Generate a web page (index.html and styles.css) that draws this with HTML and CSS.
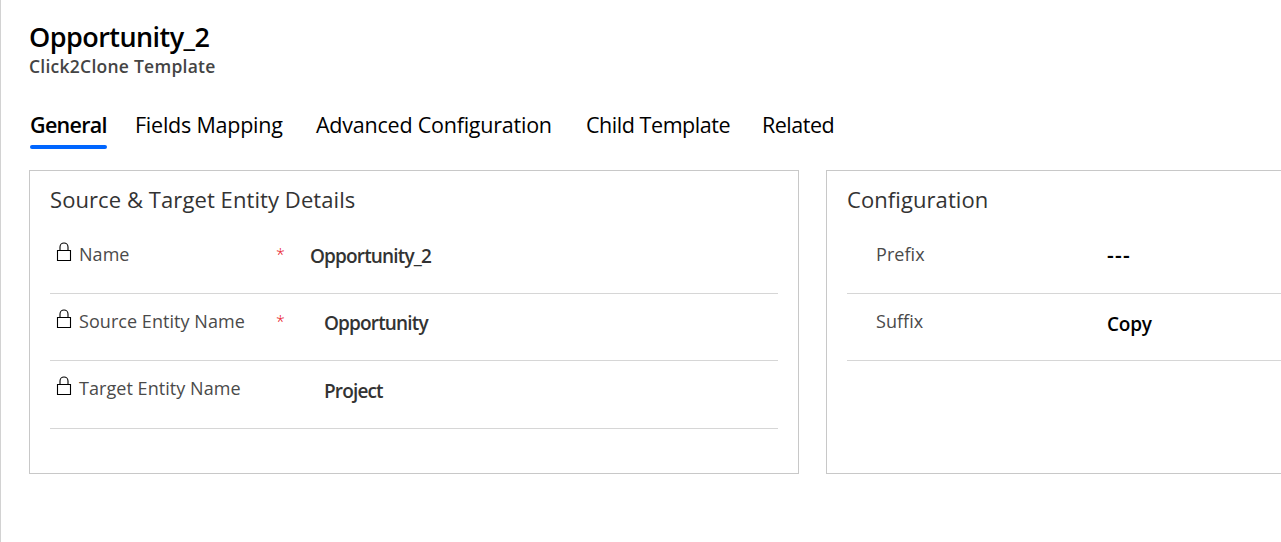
FILE: index.html
```html
<!DOCTYPE html>
<html lang="en">
<head>
<meta charset="utf-8">
<title>Opportunity_2</title>
<link rel="stylesheet" href="styles.css">
</head>
<body>
<svg class="defs" aria-hidden="true"><symbol id="lock" viewBox="0 0 16 20"><path d="M1.5 8.5h13v10h-13zM4 8V5a4 4 0 0 1 8 0V8" fill="none" stroke="currentColor" stroke-width="1.1"/></symbol></svg>
<main class="page">
  <header class="header">
    <h1 class="title">Opportunity_2</h1>
    <p class="subtitle">Click2Clone Template</p>
  </header>
  <nav class="tabs">
    <a class="tab tab-active">General</a>
    <a class="tab tab-fields">Fields Mapping</a>
    <a class="tab tab-advanced">Advanced Configuration</a>
    <a class="tab tab-child">Child Template</a>
    <a class="tab tab-related">Related</a>
  </nav>
  <div class="panels">
    <section class="panel panel-source">
      <h2 class="panel-title">Source &amp; Target Entity Details</h2>
      <div class="row">
        <svg class="lock"><use href="#lock"/></svg><span class="label">Name</span><span class="required">*</span><span class="value value-name">Opportunity_2</span>
      </div>
      <div class="row">
        <svg class="lock"><use href="#lock"/></svg><span class="label">Source Entity Name</span><span class="required">*</span><span class="value">Opportunity</span>
      </div>
      <div class="row row-last">
        <svg class="lock"><use href="#lock"/></svg><span class="label">Target Entity Name</span><span class="required"></span><span class="value">Project</span>
      </div>
    </section>
    <section class="panel panel-config">
      <h2 class="panel-title">Configuration</h2>
      <div class="row">
        <span class="label label-config">Prefix</span><span class="value value-config value-empty">---</span>
      </div>
      <div class="row">
        <span class="label label-config">Suffix</span><span class="value value-config">Copy</span>
      </div>
    </section>
  </div>
</main>
</body>
</html>
```
FILE: styles.css
```css
* { box-sizing: border-box; }
body {
  margin: 0;
  background: #fff;
  font-family: "Open Sans", "Noto Sans", sans-serif;
  color: #000;
}
.defs { display: none; }
.page {
  height: 542px;
  border-left: 1px solid #d2d2d2;
  padding: 19px 0 0 28px;
  white-space: nowrap;
}
.header { height: 91px; }
.title { margin: 0; font-size: 27px; line-height: 36px; font-weight: 600; letter-spacing: -0.55px; }
.subtitle { margin: 0; font-size: 17.5px; line-height: 22px; font-weight: 600; letter-spacing: 0.25px; color: #444; }
.tabs { display: flex; height: 60px; padding-left: 1px; }
.tab { font-size: 21.5px; line-height: 30px; flex: none; font-weight: 400; letter-spacing: -0.23px; }
.tab-active { width: 77px; height: 39px; margin-right: 28px; font-weight: 600; letter-spacing: -0.7px; position: relative; }
.tab-active::after {
  content: "";
  position: absolute;
  left: 0;
  bottom: 0;
  width: 77px;
  height: 4px;
  border-radius: 2px;
  background: #0066ff;
}
.tab-fields { width: 181px; }
.tab-advanced { width: 270px; }
.tab-child { width: 176px; letter-spacing: -0.45px; }
.tab-related { letter-spacing: -0.5px; }
.panels { display: flex; gap: 27px; }
.panel { height: 304px; border: 1px solid #c8c8c8; padding: 0 20px; }
.panel-source { width: 770px; flex: none; }
.panel-config { flex: 1; border-right: 0; padding-right: 0; }
.panel-title { margin: 0; height: 56px; padding-top: 13px; font-size: 22px; line-height: 30px; font-weight: 400; letter-spacing: 0.08px; color: #333; }
.row { display: flex; height: 67px; border-bottom: 1px solid #d6d6d6; padding: 14px 0 0 6px; line-height: 26px; font-size: 18px; }
.row-last { height: 68px; }
.lock { width: 16px; height: 20px; margin: 1px 7px 0 0; flex: none; }
.label { width: 197px; font-weight: 400; letter-spacing: 0.05px; color: #4a4a4a; }
.required { width: 48px; font-size: 16px; font-weight: 300; color: #e81123; }
.value { font-size: 19px; font-weight: 600; letter-spacing: -0.85px; color: #333; padding-top: 2px; }
.row-last .value { padding-top: 3px; }
.value-name { margin-left: -14px; }
.label-config { padding-left: 23px; width: 254px; }
.value-config { color: #000; letter-spacing: -0.2px; padding-top: 3px; }
.value-empty { font-size: 21px; letter-spacing: 1.3px; padding-top: 1px; }
```
